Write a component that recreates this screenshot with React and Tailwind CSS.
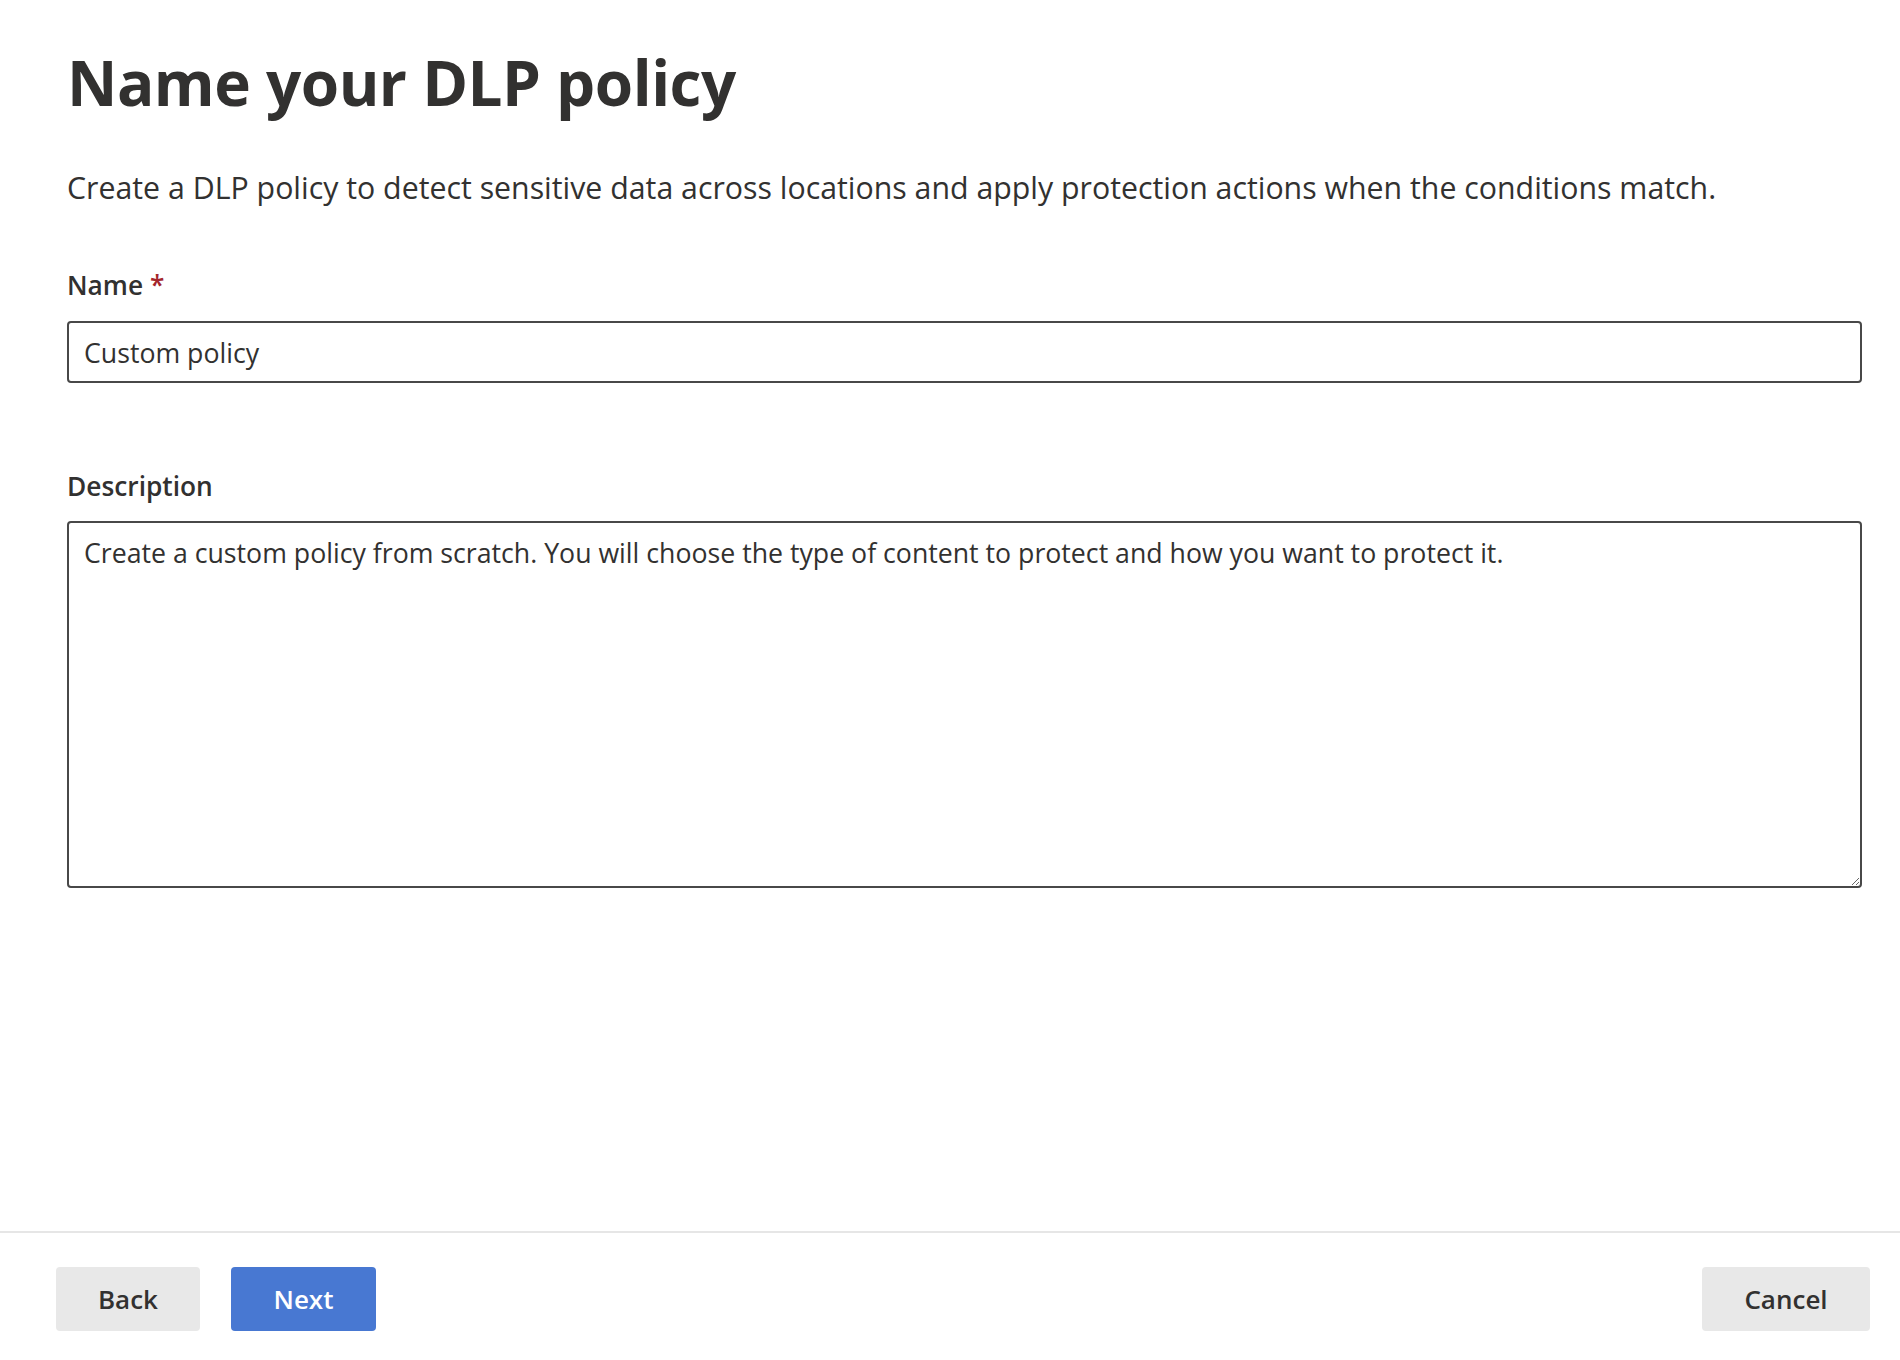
import React from 'react';

export default function App() {
  return (
    <div className="min-h-[1360px] flex flex-col bg-white text-[#323130] font-['Segoe_UI','Open_Sans',sans-serif]">
      <main className="flex-1 pl-[67px] pr-[38px] pt-[46px]">
        <h1 className="text-[62px] font-bold leading-[72px] tracking-[-0.5px]">Name your DLP policy</h1>
        <p className="mt-[50px] text-[30.3px] leading-[40px]">
          Create a DLP policy to detect sensitive data across locations and apply protection actions when the conditions match.
        </p>

        {/* Name */}
        <label className="block mt-[59px] text-[26.3px] font-semibold leading-[36px]">
          Name <span className="text-[#a4262c]">*</span>
        </label>
        <input
          type="text"
          defaultValue="Custom policy"
          className="mt-[18px] block w-full h-[62px] px-[15px] border-2 border-[#484848] rounded-[4px] text-[26.7px] outline-none"
        />

        {/* Description */}
        <label className="block mt-[85px] text-[26.3px] font-semibold leading-[36px]">Description</label>
        <textarea
          defaultValue="Create a custom policy from scratch. You will choose the type of content to protect and how you want to protect it."
          className="mt-[17px] block w-full h-[367px] px-[15px] pt-[10px] border-2 border-[#484848] rounded-[4px] text-[26.7px] leading-[40px] outline-none"
        />
      </main>

      <footer className="border-t-2 border-[#e6e6e6] pl-[56px] pr-[30px] pt-[34px] pb-[29px] flex items-center">
        <div className="flex gap-[31px]">
          <button className="w-[144px] h-[64px] rounded-[4px] bg-[#e8e8e8] text-[26px] font-semibold">Back</button>
          <button className="w-[145px] h-[64px] rounded-[4px] bg-[#4878d2] text-white text-[26px] font-semibold">Next</button>
        </div>
        <button className="ml-auto w-[168px] h-[64px] rounded-[4px] bg-[#e8e8e8] text-[26px] font-semibold">Cancel</button>
      </footer>
    </div>
  );
}
